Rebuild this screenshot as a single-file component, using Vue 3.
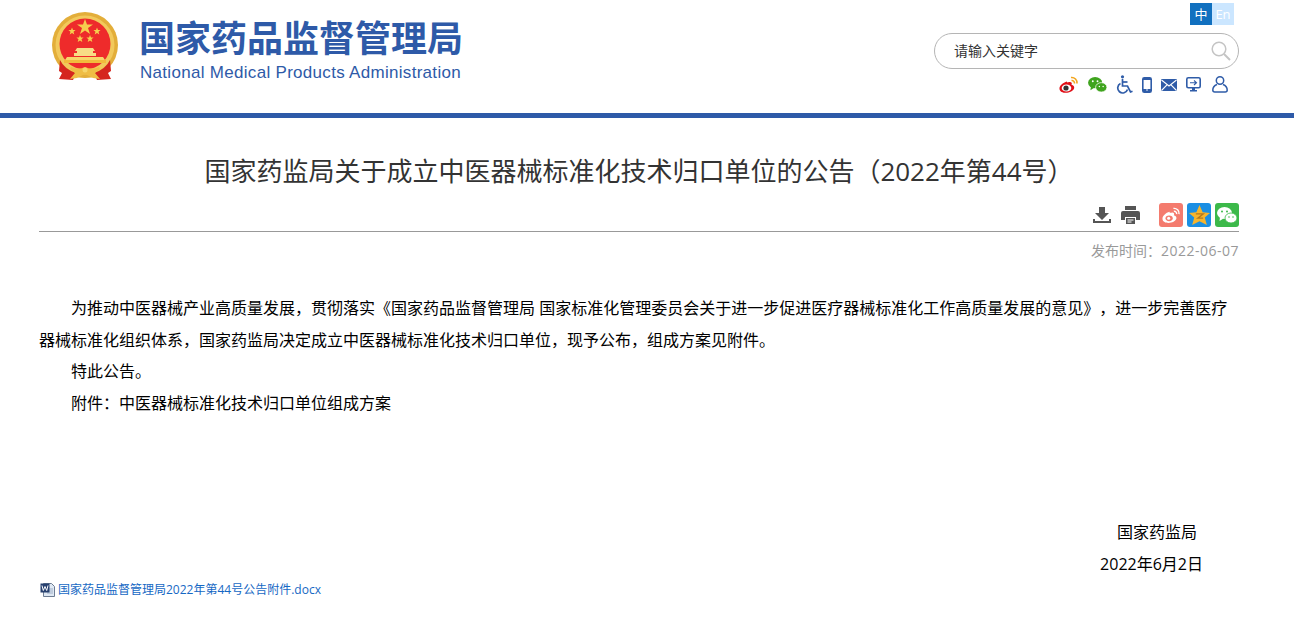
<template>
  <div class="page">
    <header class="header">
      <div class="brand">
        <svg class="emblem" viewBox="0 0 66 70" width="66" height="70">
          <circle cx="33" cy="33" r="33" fill="#e3ae3a" />
          <circle cx="33" cy="33" r="29.500" fill="#f2c95c" />
          <circle cx="33" cy="32" r="25.500" fill="#ee2b2b" />
          <polygon points="33,7 35,12.500 41,12.500 36,16 38,22 33,18.500 28,22 30,16 25,12.500 31,12.500" fill="#f6cf4e" />
          <polygon points="20,15.500 21,18 23.600,18 21.500,19.800 22.300,22.500 20,21 17.700,22.500 18.500,19.800 16.400,18 19,18" fill="#f6cf4e" />
          <polygon points="45,15.500 46,18 48.600,18 46.500,19.800 47.300,22.500 45,21 42.700,22.500 43.500,19.800 41.400,18 44,18" fill="#f6cf4e" />
          <polygon points="28,23 29,25.500 31.600,25.500 29.500,27.300 30.300,30 28,28.500 25.700,30 26.500,27.300 24.400,25.500 27,25.500" fill="#f6cf4e" />
          <polygon points="38,23 39,25.500 41.600,25.500 39.500,27.300 40.300,30 38,28.500 35.700,30 36.500,27.300 34.400,25.500 37,25.500" fill="#f6cf4e" />
          <path d="M25 36h16l2 3h-2v2h3v3H22v-3h3v-2h-2z" fill="#f8dc86" />
          <path d="M15 45h36l2 3H13z" fill="#f8d56a" />
          <path d="M12 48h42v3H12z" fill="#f2bb3c" />
          <path d="M8 48q4 9 16 13l-3 7-14-1 3-6-3-2zM58 48q-4 9-16 13l3 7 14-1-3-6 3-2z" fill="#d5251e" />
          <path d="M19 55q7 3 14 0 7 3 14 0l1 2-5 4 5 6-7-1-8-4-8 4-7 1 5-6-5-4z" fill="#efbd45" />
          <circle cx="33" cy="58" r="2.500" fill="#f6d56b" />
        </svg>
        <div class="brand-text">
          <div class="brand-cn">国家药品监督管理局</div>
          <div class="brand-en">National Medical Products Administration</div>
        </div>
      </div>
      <div class="tools">
        <div class="lang">
          <span class="lang-cn">中</span>
          <span class="lang-en">En</span>
        </div>
        <div class="search">
          <span class="search-text">请输入关键字</span>
          <svg viewBox="0 0 20 20" width="20" height="20" fill="none" stroke="#c4c4c4" stroke-width="1.500">
            <circle cx="8" cy="8" r="6.800" />
            <path d="M13 13l6 6" stroke-width="2" />
          </svg>
        </div>
        <div class="tool-icons">
          <svg viewBox="0 0 20 18" width="20" height="18">
            <path d="M8 5.500C4 6.500 0 10 .5 13c.5 3.500 5.500 4.500 9 3.500 4-1 6.500-3.500 5.500-6-.6-1.300-2-1.500-2.500-1.500 1-2.500-.5-3.500-2.500-3-1 .3-2 .5-2 .5z" fill="#e00f17" />
            <ellipse cx="7.500" cy="12" rx="4.800" ry="3.600" fill="#fff" />
            <circle cx="7" cy="12" r="2.600" fill="#333" />
            <path d="M12 1.500c3.500-.5 6.500 2.500 6 6M12.500 4.500c1.700-.3 3.200 1.200 3 3" fill="none" stroke="#f2a51d" stroke-width="1.600" />
          </svg>
          <svg viewBox="0 0 20 17" width="19" height="16">
            <ellipse cx="7.500" cy="6" rx="7.500" ry="6" fill="#3fa41e" />
            <path d="M3 10l-.5 4 4-2.500z" fill="#3fa41e" />
            <ellipse cx="14" cy="11" rx="6" ry="5" fill="#3fa41e" stroke="#fff" stroke-width=".8" />
            <circle cx="5" cy="4.500" r="1" fill="#fff" />
            <circle cx="10" cy="4.500" r="1" fill="#fff" />
            <circle cx="12" cy="10" r=".8" fill="#fff" />
            <circle cx="16" cy="10" r=".8" fill="#fff" />
          </svg>
          <svg viewBox="0 0 17 19" width="17" height="19" fill="none" stroke="#2f5ca8" stroke-width="1.700">
            <circle cx="6.500" cy="1.800" r="1.600" fill="#2f5ca8" stroke="none" />
            <path d="M6.500 4v7h5l3 6 2-.8" />
            <path d="M6.500 7h5" />
            <path d="M4.500 8.500a5 5 0 1 0 7 6" />
          </svg>
          <svg viewBox="0 0 10 16" width="10" height="16">
            <rect x=".8" y=".8" width="8.400" height="14.400" rx="1.500" fill="none" stroke="#2f5ca8" stroke-width="1.600" />
            <rect x="1" y="1" width="8" height="2" fill="#2f5ca8" />
            <rect x="1" y="12" width="8" height="3" fill="#2f5ca8" />
            <circle cx="5" cy="13" r=".8" fill="#fff" />
          </svg>
          <svg viewBox="0 0 16 12" width="16" height="12">
            <rect width="16" height="12" rx="1" fill="#2f5ca8" />
            <path d="M.5 1L8 7l7.500-6M.5 11.500L6 5.800M15.500 11.500L10 5.800" fill="none" stroke="#fff" stroke-width="1.100" />
          </svg>
          <svg viewBox="0 0 15 15" width="15" height="15">
            <rect x=".8" y=".8" width="13.400" height="9.900" rx="1.500" fill="none" stroke="#2f5ca8" stroke-width="1.600" />
            <path d="M4 5.700h6.500M8 3.500l2.500 2.200L8 8" fill="none" stroke="#2f5ca8" stroke-width="1.100" />
            <path d="M6 11h3v2h2v1.500H4V13h2z" fill="#2f5ca8" />
          </svg>
          <svg class="user" viewBox="0 0 16 17" width="16" height="17" fill="none" stroke="#2f5ca8" stroke-width="1.500">
            <circle cx="8" cy="4.500" r="3.700" />
            <path d="M5 8.500C2.500 9.500.8 11.500.8 14c0 1.300.7 2 2 2h10.400c1.300 0 2-.7 2-2 0-2.500-1.700-4.500-4.200-5.500" />
          </svg>
        </div>
      </div>
    </header>
    <div class="rule"></div>

    <main class="article">
      <h1 class="title">国家药监局关于成立中医器械标准化技术归口单位的公告（2022年第44号）</h1>
      <div class="share">
        <svg viewBox="0 0 18 16" width="18" height="16">
          <path d="M6 0h6v6h4l-7 7-7-7h4zM0 12h2v2h14v-2h2v4H0z" fill="#555" />
        </svg>
        <svg class="print" viewBox="0 0 19 18" width="19" height="18">
          <path d="M4 0h11v4H4zM2 5h15a2 2 0 0 1 2 2v7h-4v-3H4v3H0V7a2 2 0 0 1 2-2zM5 12h9v6H5z" fill="#555" />
          <path d="M6.500 14h6M6.500 16h4" stroke="#fff" stroke-width="1" />
        </svg>
        <span class="tile weibo">
          <svg viewBox="0 0 20 18" width="19" height="17">
            <path d="M8 5C4 6 0 9.500.5 13c.5 3.500 5.500 4.500 9 3.500 4-1 6.500-3.500 5.500-6-.6-1.300-2-1.500-2.500-1.500 1-2.500-.5-3.500-2.500-3-1 .3-2 0-2 0z" fill="#fff" />
            <ellipse cx="7.500" cy="12" rx="3.800" ry="3" fill="#f47b6e" />
            <circle cx="7" cy="12" r="1.600" fill="#fff" />
            <path d="M12 1.500c3.500-.5 6.500 2.500 6 6M12.500 4.500c1.700-.3 3.200 1.200 3 3" fill="none" stroke="#fff" stroke-width="1.500" />
          </svg>
        </span>
        <span class="tile qzone">
          <svg viewBox="0 0 20 20" width="21" height="21">
            <polygon points="10,0 13,7 20,7.500 15,12 17,19 10,15.500 3,19 5,12 0,7.500 7,7" fill="#f7b52c" />
            <path d="M6.500 8.500h7l-5 4h5" fill="none" stroke="#b5791c" stroke-width="1.300" />
          </svg>
        </span>
        <span class="tile wechat">
          <svg viewBox="0 0 20 17" width="20" height="17">
            <ellipse cx="7.500" cy="6" rx="7.500" ry="6" fill="#fff" />
            <path d="M3 10l-.5 4 4-2.500z" fill="#fff" />
            <ellipse cx="14" cy="11" rx="6" ry="5" fill="#fff" stroke="#3cb94a" stroke-width=".8" />
            <circle cx="5" cy="4.500" r="1" fill="#3cb94a" />
            <circle cx="10" cy="4.500" r="1" fill="#3cb94a" />
            <circle cx="12" cy="10" r=".8" fill="#3cb94a" />
            <circle cx="16" cy="10" r=".8" fill="#3cb94a" />
          </svg>
        </span>
      </div>
      <div class="date">发布时间：<span class="date-num">2022-06-07</span></div>

      <div class="body">
        <p class="indent">为推动中医器械产业高质量发展，贯彻落实《国家药品监督管理局 国家标准化管理委员会关于进一步促进医疗器械标准化工作高质量发展的意见》，进一步完善医疗器械标准化组织体系，国家药监局决定成立中医器械标准化技术归口单位，现予公布，组成方案见附件。</p>
        <p class="indent">特此公告。</p>
        <p class="indent">附件：中医器械标准化技术归口单位组成方案</p>
      </div>

      <div class="sign">
        <p class="sign-org">国家药监局</p>
        <p class="sign-date">2022年6月2日</p>
      </div>

      <a class="attachment">
        <svg viewBox="0 0 16 16" width="16" height="16">
          <path d="M3.500 1.500h8l3 3v10h-11z" fill="#dfe8f3" stroke="#6d7c92" />
          <path d="M7 7h6M7 9h6M7 11h6" stroke="#9fb0c8" />
          <rect x=".5" y="1.500" width="9" height="9" fill="#27406f" />
          <path d="M2 3.500l1.300 5 1.700-4 1.700 4 1.300-5" fill="none" stroke="#fff" stroke-width="1" />
        </svg>
        <span>国家药品监督管理局2022年第44号公告附件.docx</span>
      </a>
    </main>
  </div>
</template>

<script setup>
</script>

<style>
body {
  background: #fff;
}
</style>

<style scoped>
.page {
  width: 1294px;
  height: 638px;
  overflow: hidden;
  font-family: "Open Sans", "Noto Sans CJK SC", sans-serif;
  text-spacing-trim: space-all;
  color: #000;
}

.header {
  height: 113px;
  box-sizing: border-box;
  display: flex;
  justify-content: space-between;
  padding: 0 55px 0 52px;
}

.brand {
  display: flex;
  padding-top: 12px;
  height: 70px;
}

.emblem {
  flex: none;
}

.brand-text {
  margin-left: 21px;
  color: #2e5aa8;
}

.brand-cn {
  font-family: "Noto Sans CJK SC", sans-serif;
  font-size: 36px;
  font-weight: 700;
  line-height: 40px;
  margin-top: 4px;
  white-space: nowrap;
}

.brand-en {
  font-family: "Liberation Sans", sans-serif;
  font-size: 17px;
  letter-spacing: 0.3px;
  line-height: 20px;
  margin-top: 7px;
  margin-left: 1px;
  white-space: nowrap;
}

.tools {
  width: 305px;
  display: flex;
  flex-direction: column;
  align-items: stretch;
  padding-top: 3px;
}

.lang {
  display: flex;
  justify-content: flex-end;
  margin-right: 5px;
}

.lang span {
  width: 22px;
  height: 22px;
  line-height: 22px;
  text-align: center;
  font-size: 13px;
  color: #fff;
}

.lang-cn {
  background: #1170bf;
}

.lang-en {
  background: #cbe6ff;
}

.search {
  height: 36px;
  margin-top: 8px;
  box-sizing: border-box;
  border: 1px solid #b5b5b5;
  border-radius: 18px;
  display: flex;
  align-items: center;
  justify-content: space-between;
  padding: 0 7px 0 19px;
  font-size: 14px;
  color: #333;
}

.search-text {
  padding-bottom: 2px;
}

.tool-icons {
  display: flex;
  align-items: center;
  justify-content: flex-end;
  gap: 9px;
  margin-top: 6px;
  margin-right: 11px;
}

.user {
  margin-left: 2px;
}

.rule {
  height: 5px;
  background: #2e5aa8;
}

.article {
  width: 1200px;
  margin-left: 39px;
}

.title {
  margin: 0;
  padding-top: 33px;
  font-size: 26px;
  font-weight: 400;
  line-height: 40px;
  color: #333;
  text-align: center;
  white-space: nowrap;
}

.share {
  height: 36px;
  box-sizing: border-box;
  margin-top: 5px;
  padding: 7px 0 4px;
  display: flex;
  align-items: center;
  justify-content: flex-end;
  gap: 4px;
  border-bottom: 1px solid #999;
}

.print {
  margin: 0 15px 0 6px;
}

.tile {
  width: 24px;
  height: 24px;
  border-radius: 3px;
  display: flex;
  align-items: center;
  justify-content: center;
}

.weibo {
  background: #f47b6e;
}

.qzone {
  background: #1b8fe3;
}

.wechat {
  background: #3cb94a;
}

.date {
  margin-top: 9px;
  font-size: 14px;
  line-height: 20px;
  text-align: right;
  color: #999;
}

.date-num {
  letter-spacing: 0.5px;
}

.body {
  margin-top: 32px;
  font-size: 16px;
  line-height: 31.700px;
}

.body p {
  margin: 0;
}

.indent {
  text-indent: 32px;
}

.sign {
  margin-top: 96px;
  font-size: 16px;
  line-height: 32px;
  text-align: right;
}

.sign p {
  margin: 0;
}

.sign-org {
  padding-right: 42px;
}

.sign-date {
  padding-right: 36px;
}

.attachment {
  display: flex;
  align-items: center;
  gap: 2px;
  margin-top: 0;
  margin-left: 1px;
  font-size: 12px;
  line-height: 20px;
  color: #1668c4;
}
</style>
